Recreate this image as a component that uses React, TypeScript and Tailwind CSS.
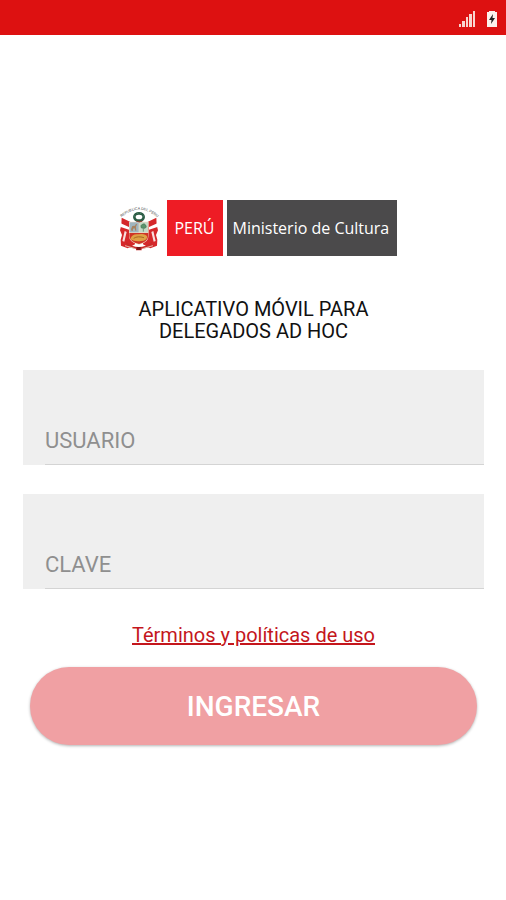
import { useState } from "react";

function StatusBar() {
  return (
    <header className="flex h-[35px] items-center justify-end gap-[11px] bg-[#dd1111] pt-0.5 pr-2">
      <svg className="h-[18px] w-4" viewBox="0 0 16 18" fill="#f9d5d0" aria-label="Señal">
        <rect x="0" y="14" width="2" height="3" />
        <rect x="3" y="11" width="3" height="6" />
        <rect x="7" y="7" width="2" height="10" />
        <rect x="10" y="4" width="3" height="13" />
        <rect x="14" y="1" width="3" height="16" />
      </svg>
      <svg className="h-[18px] w-3" viewBox="0 0 12 18" aria-label="Batería">
        <path d="M3 2V1h6v1h2v15H1V2z" fill="#fdf1ec" />
        <path d="M7 4L3 10h2.500L5 14l4-6H6.500z" fill="#222" />
      </svg>
    </header>
  );
}

function Crest() {
  return (
    <svg className="h-[46px] w-10 overflow-visible" viewBox="28 32 120 138" aria-label="Escudo del Perú">
      <defs>
        <path id="arc" d="M32 72Q88 20 146 72" />
      </defs>
      <text fontSize="11" fill="#444" textAnchor="middle" className="font-['Liberation_Sans',sans-serif]">
        <textPath href="#arc" startOffset="50%">
          REPUBLICA DEL PERU
        </textPath>
      </text>
      {/* flags */}
      <path d="M36 70L64 84H76V150L54 162 34 154 33 136 37 122 31 108 35 92z" fill="#d5282b" />
      <path d="M140 70L112 84H100V150L122 162 142 154 143 136 139 122 145 108 141 92z" fill="#d5282b" />
      <path d="M33 87L58 98V106L33 98zM143 87L118 98V106L143 98z" fill="#fff" />
      <path d="M45 110L51 113 44 142 38 140zM131 110L125 113 132 142 138 140z" fill="#f8dede" />
      {/* laurel base */}
      <path d="M48 142Q87 174 128 142L122 158 96 163V168H79V163L54 158z" fill="#c72b29" />
      <path d="M46 154l28 8M130 154l-28 8" stroke="#e6b6a8" strokeWidth="3" />
      <rect x="81" y="158" width="12" height="9" fill="#7c1518" />
      {/* shield */}
      <path d="M58 82H117V122Q117 146 88 151Q58 146 58 122z" fill="#eed9c4" />
      <path d="M60 84H87V114H60z" fill="#9fb5c0" />
      <path d="M89 84H115V114H89z" fill="#c6d8c6" />
      <path d="M64 105l4-10 8-1 3-6 3 2-3 7 1 12h-3l-2-7-5 1-1 7h-3z" fill="#a8825f" />
      <path d="M101 112V102M95 101q-4-8 3-11 6-4 10 2 5 8-3 10z" stroke="#49785a" strokeWidth="2" fill="#5b936b" />
      <path d="M59 116H116V124Q114 143 88 149Q61 143 59 124z" fill="#cf3427" />
      <path d="M62 135Q66 118 86 120Q106 116 113 127Q110 140 94 140Q76 143 62 135z" fill="#dfa044" />
      <path d="M72 132Q84 124 103 130" stroke="#a96822" strokeWidth="3" fill="none" />
      {/* wreath */}
      <ellipse cx="88" cy="68" rx="14" ry="11" fill="#fff" stroke="#2b5c45" strokeWidth="8" />
      <path d="M73 64l5 4M103 64l-5 4M83 56l3 4M94 56l-3 4" stroke="#5d8f74" strokeWidth="2" />
      <path d="M80 80q9 6 18 0" stroke="#983b2f" strokeWidth="3" fill="none" />
    </svg>
  );
}

function Logo() {
  return (
    <div className="flex items-center pl-2 font-['Open_Sans','Noto_Sans',sans-serif] text-base text-white">
      <Crest />
      <div className="ml-2 flex h-14 w-14 items-center justify-center bg-[#ee1c25]">PERÚ</div>
      <div className="ml-1 flex h-14 w-[170px] items-center bg-[#4b4a4b] pl-1.5 whitespace-nowrap">
        Ministerio de Cultura
      </div>
    </div>
  );
}

type FieldProps = {
  label: string;
  type: string;
  value: string;
  onChange: (value: string) => void;
};

function Field({ label, type, value, onChange }: FieldProps) {
  return (
    <div className="bg-[#efefef] pl-[22px]">
      <input
        type={type}
        aria-label={label}
        placeholder={label}
        value={value}
        onChange={(e) => onChange(e.target.value)}
        className="block h-[95px] w-full border-b border-[#d4d4d4] pt-[46px] text-[22px] text-[#333] outline-none placeholder:text-[#8f8f8f]"
      />
    </div>
  );
}

export default function App() {
  const [user, setUser] = useState("");
  const [password, setPassword] = useState("");

  return (
    <div className="min-h-screen bg-white font-[Roboto,sans-serif]">
      <StatusBar />
      <main className="flex flex-col items-center pt-[165px] pr-[22px] pl-[23px]">
        <Logo />
        <h1 className="mt-[42px] text-center text-xl leading-[22px] text-[#111]">
          APLICATIVO MÓVIL PARA
          <br />
          DELEGADOS AD HOC
        </h1>
        <form className="mt-7 flex w-full flex-col" onSubmit={(e) => e.preventDefault()}>
          <div className="flex flex-col gap-[29px]">
            <Field label="USUARIO" type="text" value={user} onChange={setUser} />
            <Field label="CLAVE" type="password" value={password} onChange={setPassword} />
          </div>
          <a href="#terminos" className="mt-8 self-center text-xl text-[#c4161c] underline">
            Términos y políticas de uso
          </a>
          <button
            type="submit"
            className="mx-[7px] mt-[18px] h-[78px] rounded-full bg-[#f0a0a3] pt-0.5 text-[28px] font-medium text-white shadow-[0_1px_3px_rgba(0,0,0,0.3)]"
          >
            INGRESAR
          </button>
        </form>
      </main>
    </div>
  );
}
